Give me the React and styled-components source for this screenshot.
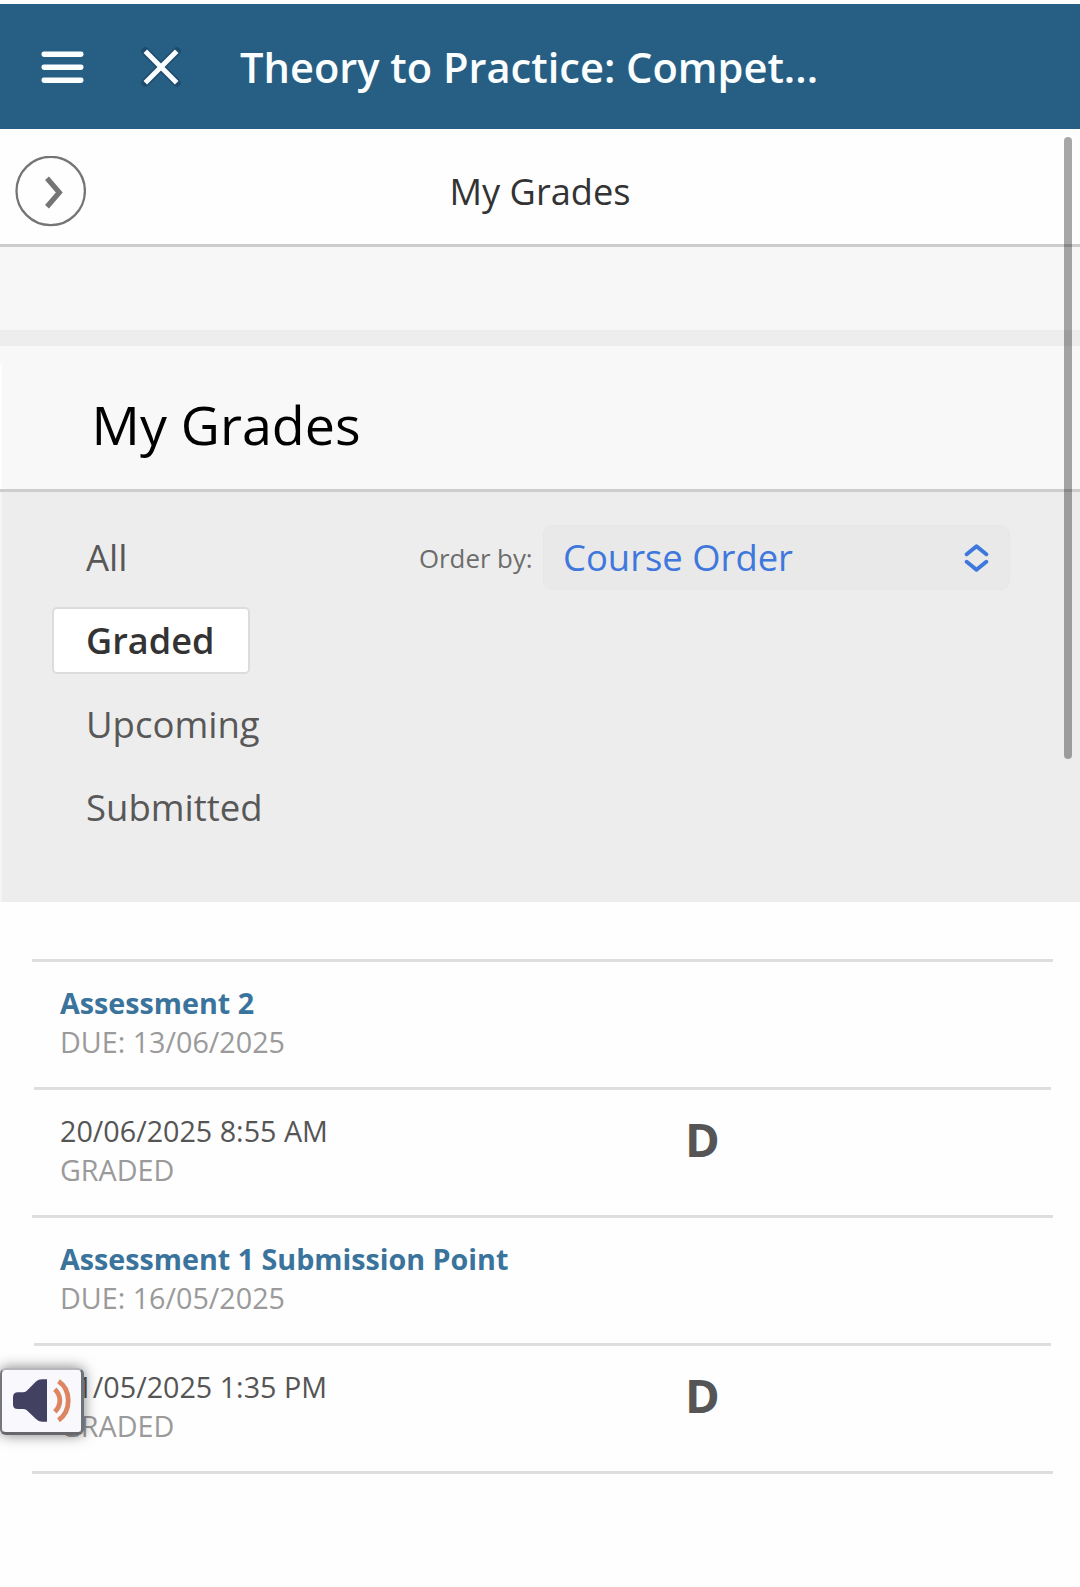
import React from 'react'
import styled, { createGlobalStyle } from 'styled-components';

const GlobalStyle = createGlobalStyle`
    *{
        box-sizing: border-box;
    }
    body{
        margin: 0;
        background: #fefefe;
        font-family: "Open Sans", "Noto Sans", sans-serif;
    }
    button, h1, h2{
        margin: 0;
        padding: 0;
        border: 0;
        background: none;
        font: inherit;
        color: inherit;
    }
`

const filters = ["All", "Graded", "Upcoming", "Submitted"]

const grades = [
    {
        title: "Assessment 2",
        due: "13/06/2025",
        activity: "20/06/2025 8:55 AM",
        status: "GRADED",
        grade: "D"
    },
    {
        title: "Assessment 1 Submission Point",
        due: "16/05/2025",
        activity: "21/05/2025 1:35 PM",
        status: "GRADED",
        grade: "D"
    }
]

const Screen = styled.div`
    position: relative;
    width: 1080px;
    height: 1587px;
    padding-top: 4px;
    overflow: hidden;
    white-space: nowrap;
`

const TopBar = styled.header`
    display: flex;
    align-items: center;
    height: 125px;
    padding-left: 41px;
    background: #275f84;
    color: #fbfeff;
`

const IconButton = styled.button`
    display: flex;
    margin-right: ${props => props.$gap}px;
`

const CourseTitle = styled.h1`
    font-size: 41.6px;
    font-weight: 600;
`

const SubBar = styled.div`
    display: grid;
    grid-template-columns: 1fr auto 1fr;
    align-items: center;
    height: 118px;
    padding: 9px 0 0 15px;
    border-bottom: 3px solid #cdcdcd;
    color: #333;
`

const RoundButton = styled.button`
    display: flex;
    width: 71px;
    height: 71px;
`

const SubTitle = styled.div`
    font-size: 36.2px;
    margin-right: 15px;
`

const Strip = styled.div`
    height: 99px;
    background: #f7f7f7;
    border-bottom: 16px solid #ededed;
`

const Heading = styled.h2`
    display: flex;
    align-items: center;
    height: 146px;
    padding: 14px 0 0 91.5px;
    background: linear-gradient(#fefefe, #fefefe) 0 18px / 2px 100% no-repeat #f8f8f8;
    border-bottom: 3px solid #cdcdcd;
    font-size: 53.8px;
    line-height: 73px;
    color: #000;
`

const Panel = styled.section`
    display: flex;
    align-items: flex-start;
    height: 410px;
    padding: 32px 0 0 50px;
    background: #ededed;
    border-left: 2px solid #f5f5f5;
`

const Filters = styled.div`
    display: flex;
    flex-direction: column;
    align-items: flex-start;
    gap: 16.4px;
    width: 367px;
`

const Filter = styled.button`
    height: 67px;
    padding: 0 ${props => props.$active ? 33.5 : 32}px 1px 32px;
    border: 2px solid ${props => props.$active ? "#dcdcdc" : "transparent"};
    border-radius: 5px;
    background: ${props => props.$active ? "#fff" : "transparent"};
    font-size: ${props => props.$active ? 36.1 : 36.5}px;
    font-weight: ${props => props.$active ? 600 : 400};
    line-height: 60px;
    color: ${props => props.$active ? "#333" : "#585858"};
`

const OrderLabel = styled.label`
    width: 124px;
    padding-top: 2px;
    font-size: 25.8px;
    line-height: 65px;
    color: #6c6c6c;
`

const OrderSelect = styled.button`
    display: flex;
    align-items: center;
    justify-content: space-between;
    width: 467px;
    height: 65px;
    margin-top: 1px;
    padding: 0 20px 1px 19px;
    border: 1px solid #e6e6e6;
    border-radius: 10px;
    background: #e9e9e9;
    font-size: 36.4px;
    color: #3f78dd;
`

const GradeList = styled.div`
    margin: 57px 27px 0 32px;
    border-top: 3px solid #dedede;
`

const Row = styled.div`
    display: flex;
    height: 128px;
    margin: 0 ${props => props.$inset ? 2 : 0}px;
    padding: 21px 0 0 ${props => props.$inset ? 26 : 28}px;
    border-bottom: 3px solid #dedede;
    font-size: 28.7px;
    line-height: 39px;
`

const Cell = styled.div`
    width: ${props => props.$width || 900}px;
`

const ItemTitle = styled.div`
    font-weight: 700;
    color: #3a739c;
`

const Activity = styled.div`
    color: #555;
`

const Muted = styled.div`
    color: #9a9a9a;
`

const Grade = styled.div`
    margin-top: -2px;
    font-size: 47px;
    font-weight: 700;
    line-height: 60px;
    color: #555;
`

const ScrollThumb = styled.div`
    position: absolute;
    top: 137px;
    right: 8px;
    width: 8px;
    height: 622px;
    border-radius: 4px;
    background: rgba(0, 0, 0, 0.34);
`

const ReadAloud = styled.button`
    && {
        position: absolute;
        top: 1368px;
        left: 0;
        display: flex;
        width: 84px;
        height: 67px;
        border: 2px solid #75777b;
        border-top-color: #b5b7bb;
        border-right: 3px solid #6c7278;
        border-bottom: 3px solid #66686c;
        border-radius: 6px;
        background: #f8f8fd;
        box-shadow: 0 0 14px rgba(0, 0, 0, 0.5);
    }
`

const MenuIcon = () => (
    <svg width="43" height="34" viewBox="0 0 43 34" fill="currentColor">
        <rect x="0.5" y="1.4" width="42" height="5.6" rx="2.4" />
        <rect x="0.5" y="14.4" width="42" height="5.6" rx="2.4" />
        <rect x="0.5" y="27.4" width="42" height="5.6" rx="2.4" />
    </svg>
)

const CloseIcon = () => (
    <svg width="42" height="42" viewBox="0 0 42 42" fill="none" strokeLinecap="round">
        <path d="M5.3 5.3L36.7 36.7M36.7 5.3L5.3 36.7" stroke="#1c4664" strokeWidth="8" opacity="0.75" />
        <path d="M5.3 5.3L36.7 36.7M36.7 5.3L5.3 36.7" stroke="currentColor" strokeWidth="5" strokeLinecap="butt" />
    </svg>
)

const ChevronIcon = () => (
    <svg width="71" height="71" viewBox="0 0 71 71" fill="none" stroke="#757575">
        <circle cx="35.7" cy="35" r="34.2" strokeWidth="2.3" />
        <path d="M32 22.3L44.3 36.5L32 50.7" strokeWidth="5.2" />
    </svg>
)

const UpDownIcon = () => (
    <svg width="25" height="29" viewBox="0 0 25 29" fill="none" stroke="currentColor" strokeWidth="4" strokeLinecap="round" strokeLinejoin="round">
        <path d="M2.7 11.2L12.5 3.2L22.3 11.2M2.7 18.8L12.5 26.8L22.3 18.8" />
    </svg>
)

const SpeakerIcon = () => (
    <svg width="79" height="62" viewBox="2 1 79 62">
        <path d="M47 10.3V52.7H42Q38.5 52.7 36 50L26.5 41Q25 40 23 40H18Q13 40 13 35.5V28Q13 23.3 18 23.3H23Q25 23.3 26.5 22L36 12.5Q38.5 10.3 42 10.3Z" fill="#434162" />
        <path d="M54.8 20.3C61.5 26.5 61.5 36.5 54.8 42.7M58.5 12.3C71.5 21 71.5 42 58.5 51.3" fill="none" stroke="#dd8560" strokeWidth="4.8" />
    </svg>
)

const App = () => {
    const [active, setActive] = React.useState("Graded")

    return (
        <React.Fragment>
            <GlobalStyle />
            <Screen>
                <TopBar>
                    <IconButton $gap={56}><MenuIcon /></IconButton>
                    <IconButton $gap={58}><CloseIcon /></IconButton>
                    <CourseTitle>Theory to Practice: Compet...</CourseTitle>
                </TopBar>
                <SubBar>
                    <RoundButton><ChevronIcon /></RoundButton>
                    <SubTitle>My Grades</SubTitle>
                </SubBar>
                <Strip />
                <Heading>My Grades</Heading>
                <Panel>
                    <Filters>
                        {filters.map(name => (
                            <Filter key={name} $active={name === active} onClick={() => setActive(name)}>{name}</Filter>
                        ))}
                    </Filters>
                    <OrderLabel>Order by:</OrderLabel>
                    <OrderSelect>
                        Course Order
                        <UpDownIcon />
                    </OrderSelect>
                </Panel>
                <GradeList>
                    {grades.map(item => (
                        <React.Fragment key={item.title}>
                            <Row $inset>
                                <Cell>
                                    <ItemTitle>{item.title}</ItemTitle>
                                    <Muted>DUE: {item.due}</Muted>
                                </Cell>
                            </Row>
                            <Row>
                                <Cell $width={625}>
                                    <Activity>{item.activity}</Activity>
                                    <Muted>{item.status}</Muted>
                                </Cell>
                                <Grade>{item.grade}</Grade>
                            </Row>
                        </React.Fragment>
                    ))}
                </GradeList>
                <ScrollThumb />
                <ReadAloud><SpeakerIcon /></ReadAloud>
            </Screen>
        </React.Fragment>
    )
}

export default App
